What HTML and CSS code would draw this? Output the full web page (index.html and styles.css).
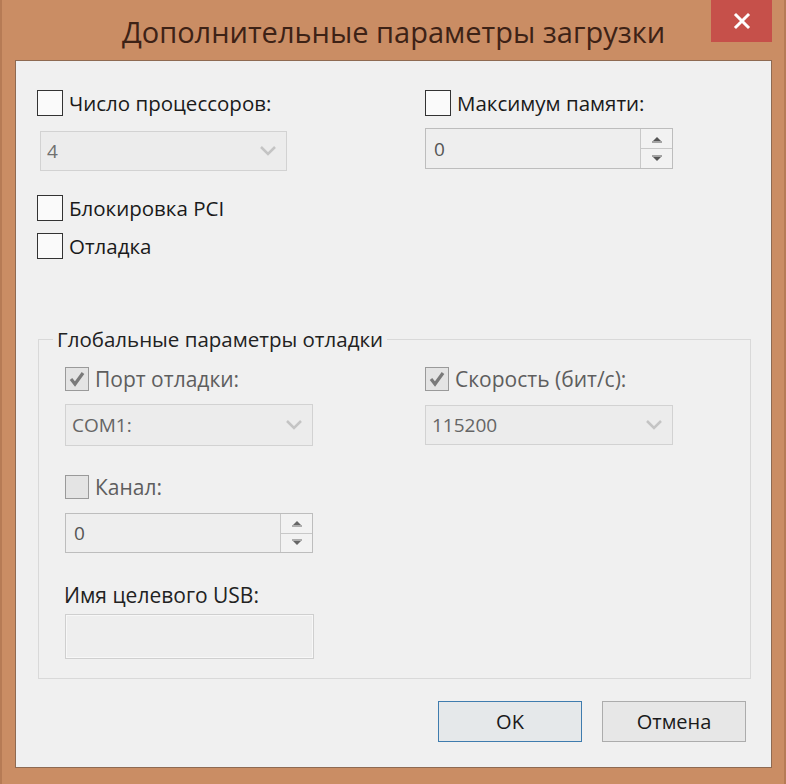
FILE: index.html
```html
<!DOCTYPE html>
<html lang="ru">
<head>
<meta charset="utf-8">
<title>Дополнительные параметры загрузки</title>
<link rel="stylesheet" href="styles.css">
</head>
<body>
<div class="window">
  <div class="titlebar">
    <div></div>
    <div class="title">Дополнительные параметры загрузки</div>
    <div class="close-wrap">
      <div class="close">
        <svg width="18" height="18" viewBox="0 0 18 18"><path d="M3 3 L15 15 M15 3 L3 15" stroke="#fff" stroke-width="3" stroke-linecap="square" fill="none"/></svg>
      </div>
    </div>
  </div>
  <div class="panel">
    <div class="top-grid">
      <div class="col">
        <div class="check-row">
          <span class="cb"></span><span class="lbl">Число процессоров:</span>
        </div>
        <div class="combo combo-cpu">
          <span class="val">4</span>
          <svg class="chev" width="16" height="10" viewBox="0 0 16 10"><path d="M1 1 L8 8 L15 1" stroke="#c4c4c4" stroke-width="2.5" fill="none"/></svg>
        </div>
        <div class="check-row row-pci">
          <span class="cb"></span><span class="lbl">Блокировка PCI</span>
        </div>
        <div class="check-row row-debug">
          <span class="cb"></span><span class="lbl">Отладка</span>
        </div>
      </div>
      <div class="col">
        <div class="check-row">
          <span class="cb"></span><span class="lbl">Максимум памяти:</span>
        </div>
        <div class="spin spin-mem">
          <span class="val">0</span>
          <div class="spin-btns">
            <div class="sb"><svg width="12" height="8" viewBox="0 0 12 8"><path d="M2 6 L6 2 L10 6 Z" fill="#555"/><path d="M1 7 H11" stroke="#555" stroke-width="1"/></svg></div>
            <div class="sb"><svg width="12" height="8" viewBox="0 0 12 8"><path d="M2 2 L6 6 L10 2 Z" fill="#555"/><path d="M1 1 H11" stroke="#555" stroke-width="1"/></svg></div>
          </div>
        </div>
      </div>
    </div>

    <fieldset class="group">
      <legend>Глобальные параметры отладки</legend>
      <div class="group-grid">
        <div class="col">
          <div class="check-row dis">
            <span class="cb cb-dis"><svg width="20" height="20" viewBox="0 0 20 20"><path d="M4 10 L8 15 L16 4" stroke="#7a7a7a" stroke-width="3.2" fill="none"/></svg></span><span class="lbl">Порт отладки:</span>
          </div>
          <div class="combo combo-port">
            <span class="val">COM1:</span>
            <svg class="chev" width="16" height="10" viewBox="0 0 16 10"><path d="M1 1 L8 8 L15 1" stroke="#c4c4c4" stroke-width="2.5" fill="none"/></svg>
          </div>
          <div class="check-row dis row-chan">
            <span class="cb cb-dis"></span><span class="lbl">Канал:</span>
          </div>
          <div class="spin spin-chan">
            <span class="val">0</span>
            <div class="spin-btns">
              <div class="sb"><svg width="12" height="8" viewBox="0 0 12 8"><path d="M2 6 L6 2 L10 6 Z" fill="#666"/><path d="M1 7 H11" stroke="#666" stroke-width="1"/></svg></div>
              <div class="sb"><svg width="12" height="8" viewBox="0 0 12 8"><path d="M2 2 L6 6 L10 2 Z" fill="#666"/><path d="M1 1 H11" stroke="#666" stroke-width="1"/></svg></div>
            </div>
          </div>
          <div class="usb-lbl">Имя целевого USB:</div>
          <div class="textbox"></div>
        </div>
        <div class="col">
          <div class="check-row dis">
            <span class="cb cb-dis"><svg width="20" height="20" viewBox="0 0 20 20"><path d="M4 10 L8 15 L16 4" stroke="#7a7a7a" stroke-width="3.2" fill="none"/></svg></span><span class="lbl">Скорость (бит/с):</span>
          </div>
          <div class="combo combo-speed">
            <span class="val">115200</span>
            <svg class="chev" width="16" height="10" viewBox="0 0 16 10"><path d="M1 1 L8 8 L15 1" stroke="#c4c4c4" stroke-width="2.5" fill="none"/></svg>
          </div>
        </div>
      </div>
    </fieldset>

    <div class="buttons">
      <div class="btn btn-default">OK</div>
      <div class="btn">Отмена</div>
    </div>
  </div>
</div>
</body>
</html>
```

FILE: styles.css
```css
* { box-sizing: border-box; }
html, body {
  margin: 0;
  padding: 0;
  background: #c98c63;
}
body {
  font-family: "Open Sans", "Noto Sans", "DejaVu Sans", sans-serif;
  color: #1c1c1c;
}
.window {
  width: 786px;
  height: 784px;
  background: #ca8d64;
  border-left: 2px solid #b67b55;
  border-right: 2px solid #b67b55;
  padding: 0 12px 0 13px;
}
.titlebar {
  height: 60px;
  display: grid;
  grid-template-columns: 1fr auto 1fr;
  align-items: start;
}
.title {
  font-size: 29px;
  color: #3d2216;
  padding-top: 12px;
  letter-spacing: 0;
  white-space: nowrap;
}
.close-wrap {
  display: flex;
  justify-content: flex-end;
}
.close {
  width: 61px;
  height: 42px;
  background: #c6504a;
  display: flex;
  align-items: center;
  justify-content: center;
}
.panel {
  height: 708px;
  background: #f0f0f0;
  border: 1px solid #8e6a52;
  display: flex;
  flex-direction: column;
}
.top-grid {
  display: grid;
  grid-template-columns: 388px 1fr;
  padding: 29px 0 0 21px;
}
.col {
  display: flex;
  flex-direction: column;
  align-items: flex-start;
}
.check-row {
  display: flex;
  align-items: center;
  height: 26px;
  gap: 6px;
}
.cb {
  width: 26px;
  height: 26px;
  border: 1.5px solid #333;
  background: #fafafa;
  display: flex;
  align-items: center;
  justify-content: center;
}
.cb-dis {
  width: 24px;
  height: 24px;
  border: 1px solid #9a9a9a;
  background: #e4e4e4;
}
.lbl {
  font-size: 20.5px;
  line-height: 26px;
  color: #1a1a1a;
}
.dis .lbl {
  color: #5e5e5e;
  font-size: 21px;
}
.combo, .spin {
  display: flex;
  align-items: center;
  background: #ececec;
  border: 1px solid #d2d2d2;
}
.val {
  font-size: 19px;
  color: #707070;
  padding-left: 6px;
  flex: 1;
}
.chev {
  margin-right: 10px;
}
.combo-cpu {
  width: 247px;
  height: 40px;
  margin: 15px 0 0 3px;
}
.row-pci { margin-top: 24px; }
.row-debug { margin-top: 12px; }
.spin {
  background: #eeeeee;
  border: 1px solid #bdbdbd;
  align-items: stretch;
}
.spin .val {
  display: flex;
  align-items: center;
  color: #555;
  padding-left: 8px;
}
.spin-mem {
  width: 248px;
  height: 41px;
  margin-top: 12px;
}
.spin-btns {
  width: 32px;
  display: flex;
  flex-direction: column;
  border-left: 1px solid #c8c8c8;
}
.sb {
  flex: 1;
  display: flex;
  align-items: center;
  justify-content: center;
  background: #f2f2f2;
}
.sb + .sb {
  border-top: 1px solid #c8c8c8;
}
.group {
  margin: 68px 20px 0 22px;
  border: 1px solid #d9d9d9;
  padding: 15px 0 19px 0;
  min-width: 0;
}
.group legend {
  font-size: 20.5px;
  line-height: 24px;
  color: #222;
  margin-left: 14px;
  padding: 0 4px;
}
.group-grid {
  display: grid;
  grid-template-columns: 360px 1fr;
  padding-left: 26px;
}
.combo-port {
  width: 248px;
  height: 42px;
  margin-top: 12px;
}
.combo-port .val, .combo-speed .val {
  color: #656565;
}
.combo-speed {
  width: 248px;
  height: 40px;
  margin-top: 13px;
}
.row-chan { margin-top: 28px; }
.spin-chan {
  width: 248px;
  height: 40px;
  margin-top: 13px;
}
.usb-lbl {
  font-size: 21px;
  line-height: 26px;
  color: #222;
  margin-top: 29px;
  margin-left: -1px;
}
.textbox {
  width: 249px;
  height: 45px;
  margin-top: 6px;
  background: #eeeeee;
  border: 1px solid #cfcfcf;
  box-shadow: inset 0 0 0 1px #f7f7f7;
}
.buttons {
  display: flex;
  justify-content: flex-end;
  gap: 20px;
  padding: 22px 25px 0 0;
}
.btn {
  width: 144px;
  height: 41px;
  border: 1px solid #acacac;
  background: #e7e7e7;
  display: flex;
  align-items: center;
  justify-content: center;
  font-size: 20px;
  color: #1a1a1a;
}
.btn-default {
  border: 1.5px solid #3f7cae;
  background: #e5e8ea;
}
```
